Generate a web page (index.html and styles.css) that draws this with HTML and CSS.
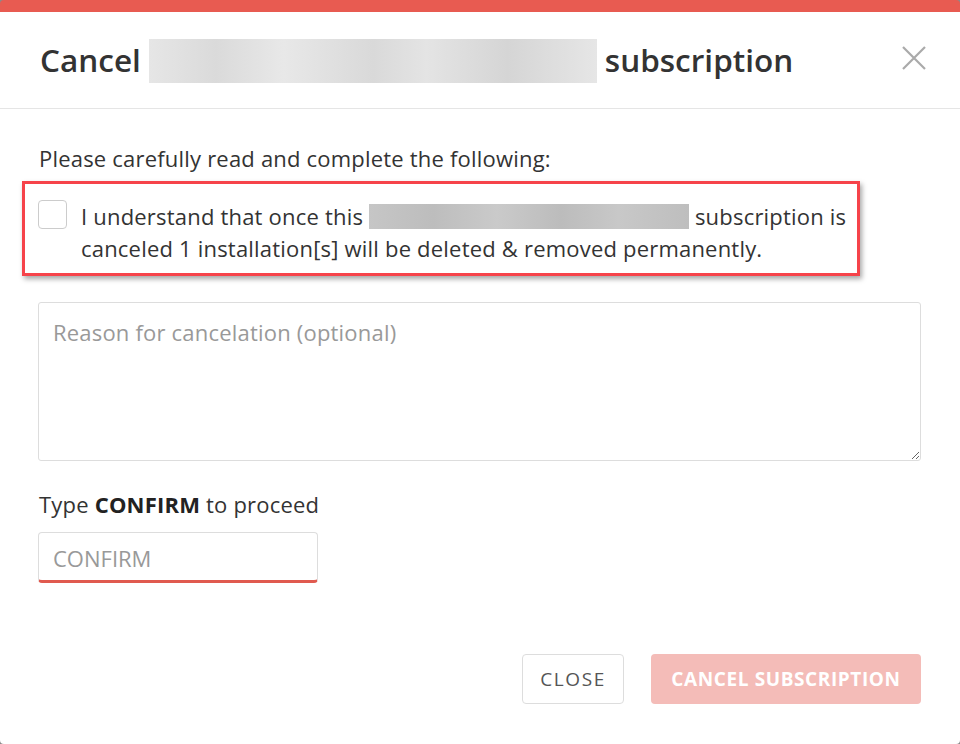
FILE: index.html
```
<!DOCTYPE html>
<html>
<head>
<meta charset="utf-8">
<link rel="stylesheet" href="styles.css">
</head>
<body>
<div class="modal">
  <div class="modal-header">
    <h1 class="title">Cancel <span class="blur blur-title"></span> subscription</h1>
    <button class="close-x" aria-label="Close">
      <svg width="24" height="24" viewBox="0 0 24 24"><path d="M1 1 L23 23 M23 1 L1 23" stroke="#aaaaaa" stroke-width="2.2" fill="none"/></svg>
    </button>
  </div>
  <div class="modal-body">
    <p class="intro">Please carefully read and complete the following:</p>
    <div class="ack-box">
      <span class="checkbox"></span>
      <p class="ack-text">I understand that once this <span class="blur blur-name"></span> subscription is canceled 1 installation[s] will be deleted &amp; removed permanently.</p>
    </div>
    <textarea class="reason" placeholder="Reason for cancelation (optional)"></textarea>
    <p class="confirm-label">Type <b>CONFIRM</b> to proceed</p>
    <input class="confirm-input" type="text" placeholder="CONFIRM">
  </div>
  <div class="modal-footer">
    <button class="btn btn-close">CLOSE</button>
    <button class="btn btn-cancel">CANCEL SUBSCRIPTION</button>
  </div>
</div>
</body>
</html>
```
FILE: styles.css
```
* { box-sizing: border-box; }
html, body { margin: 0; padding: 0; }
body {
  background: #8a8a8a;
  font-family: "Open Sans", "Noto Sans", sans-serif;
  color: #333333;
}
.modal {
  width: 960px;
  height: 744px;
  background: #ffffff;
  border-top: 12px solid #e85b51;
  border-radius: 4px;
  display: flex;
  flex-direction: column;
}
.modal-header {
  height: 97px;
  border-bottom: 1px solid #e5e5e5;
  display: flex;
  align-items: center;
  justify-content: space-between;
  padding: 0 34px 0 40px;
}
.title {
  margin: 0;
  font-size: 31.5px;
  font-weight: 600;
  line-height: 44px;
  color: #333333;
  display: flex;
  align-items: center;
  gap: 8px;
}
.blur { display: inline-block; }
.blur-title {
  width: 448px;
  height: 44px;
  background: linear-gradient(90deg, #e6e6e6 0%, #dadada 15%, #e8e8e8 30%, #d9d9d9 50%, #e4e4e4 62%, #d5d5d5 80%, #e6e6e6 100%);
  margin-top: 2px;
}
.close-x {
  border: 0;
  background: transparent;
  padding: 0;
  width: 24px;
  height: 24px;
  margin-top: -4px;
  cursor: pointer;
}
.close-x svg { display: block; }
.modal-body {
  padding: 33px 38px 0 38px;
  flex: 1;
  display: flex;
  flex-direction: column;
  align-items: flex-start;
}
.intro {
  margin: 0 0 7px 1px;
  font-size: 22px;
  line-height: 32px;
  letter-spacing: 0.2px;
}
.ack-box {
  margin-left: -16px;
  width: 838px;
  border: 3px solid #f6434a;
  box-shadow: 2px 3px 5px rgba(0,0,0,0.35);
  display: flex;
  align-items: flex-start;
  padding: 16px 10px 9px 13px;
  gap: 14px;
}
.checkbox {
  flex: none;
  width: 29px;
  height: 29px;
  border: 1px solid #cccccc;
  border-radius: 4px;
  background: #fff;
}
.ack-text {
  margin: 0;
  font-size: 22px;
  line-height: 32px;
  letter-spacing: 0.2px;
  color: #333333;
}
.blur-name {
  width: 320px;
  height: 25px;
  vertical-align: -4px;
  background: linear-gradient(90deg, #c6c6c6 0%, #bdbdbd 20%, #cacaca 40%, #bcbcbc 60%, #c8c8c8 78%, #bebebe 100%);
}
.reason {
  margin-top: 26px;
  width: 883px;
  height: 159px;
  border: 1px solid #dddddd;
  border-radius: 3px;
  padding: 14px 14px;
  font-family: "Open Sans", "Noto Sans", sans-serif;
  font-size: 22px;
  line-height: 30px;
  letter-spacing: 0.2px;
  color: #333;
  resize: vertical;
  outline: none;
}
.reason::placeholder { color: #999999; }
.confirm-label {
  margin: 27px 0 12px 1px;
  font-size: 22px;
  line-height: 32px;
  letter-spacing: 0.2px;
}
.confirm-label b { font-weight: 700; color: #222; }
.confirm-input {
  width: 280px;
  height: 51px;
  border: 1px solid #dddddd;
  border-bottom: 3px solid #e05a4f;
  border-radius: 4px;
  padding: 3px 14px 0 14px;
  font-family: "Open Sans", "Noto Sans", sans-serif;
  font-size: 22px;
  color: #333;
  outline: none;
}
.confirm-input::placeholder { color: #999999; }
.modal-footer {
  display: flex;
  justify-content: flex-end;
  gap: 27px;
  padding: 0 39px 40px 0;
}
.btn {
  height: 50px;
  border-radius: 4px;
  font-family: "Open Sans", "Noto Sans", sans-serif;
  font-size: 19px;
  cursor: pointer;
}
.btn-close {
  width: 102px;
  background: #ffffff;
  border: 1px solid #dddddd;
  color: #555555;
  font-weight: 400;
  letter-spacing: 1.6px;
}
.btn-cancel {
  width: 270px;
  background: #f4bcb8;
  border: 0;
  color: #ffffff;
  font-weight: 700;
  letter-spacing: 0.6px;
}
```
